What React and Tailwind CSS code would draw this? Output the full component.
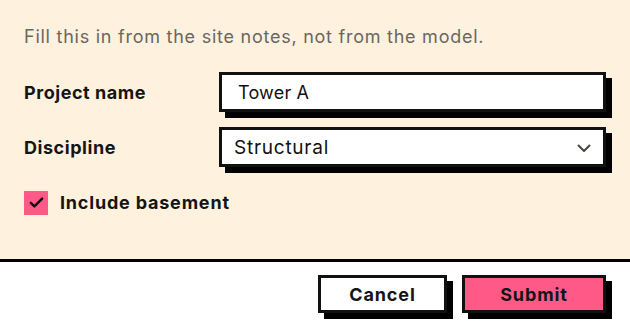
import React from "react";

export default function App() {
  return (
    <div className="w-[630px] h-[336px] bg-white" style={{ fontFamily: "Inter, 'Noto Sans', sans-serif" }}>
      <div className="bg-[#fef2df] px-6 pt-[25px] h-[259px]">
        <p className="text-[18px] leading-6 tracking-[0.75px] text-[#6b6760]">Fill this in from the site notes, not from the model.</p>
        <div className="mt-[23px] flex items-center">
          <label className="w-[195px] text-[18px] font-bold tracking-[0.55px] text-[#151515]">Project name</label>
          <div className="relative w-[387px] h-[40px]">
            <div className="absolute left-[6px] top-[6px] w-full h-full bg-black" />
            <div className="relative h-full bg-white border-[3px] border-[#111] flex items-center pl-4 pt-[1px] text-[18px] tracking-[0.2px] text-[#111]">Tower A</div>
          </div>
        </div>
        <div className="mt-[15px] flex items-center">
          <label className="w-[195px] text-[18px] font-bold tracking-[0.55px] text-[#151515]">Discipline</label>
          <div className="relative w-[387px] h-[40px]">
            <div className="absolute left-[6px] top-[6px] w-full h-full bg-black" />
            <div className="relative h-full bg-white border-[3px] border-[#111] flex items-center justify-between pl-3 pr-[12px] pt-[2px] text-[19px] tracking-[0.75px] text-[#111]">
              <span>Structural</span>
              <svg width="14" height="9" viewBox="0 0 14 9" fill="none" stroke="#4a4540" strokeWidth="2" strokeLinecap="round" strokeLinejoin="round"><path d="M1.5 1.5l5.5 5.5 5.5-5.5" /></svg>
            </div>
          </div>
        </div>
        <div className="mt-[22px] flex items-center gap-3">
          <div className="w-6 h-6 bg-[#ff5a87] flex items-center justify-center">
            <svg width="17" height="17" viewBox="0 0 24 24" fill="none" stroke="#111" strokeWidth="3.5" strokeLinecap="round" strokeLinejoin="round"><path d="M4 12.5l5 5L20 6.5" /></svg>
          </div>
          <span className="text-[18px] font-bold tracking-[0.8px] text-[#151515]">Include basement</span>
        </div>
      </div>
      <div className="h-[3px] bg-black" />
      <div className="flex justify-end gap-[15px] pr-6 pt-[13px]">
        <div className="relative w-[129px] h-[38px]">
          <div className="absolute left-[6px] top-[6px] w-full h-full bg-black" />
          <button className="relative w-full h-full bg-white border-[3px] border-[#111] text-[18px] font-bold tracking-[0.9px] text-[#151515]">Cancel</button>
        </div>
        <div className="relative w-[144px] h-[38px]">
          <div className="absolute left-[6px] top-[6px] w-full h-full bg-black" />
          <button className="relative w-full h-full bg-[#ff5a87] border-[3px] border-[#111] text-[18px] font-bold tracking-[0.9px] text-[#151515]">Submit</button>
        </div>
      </div>
    </div>
  );
}
